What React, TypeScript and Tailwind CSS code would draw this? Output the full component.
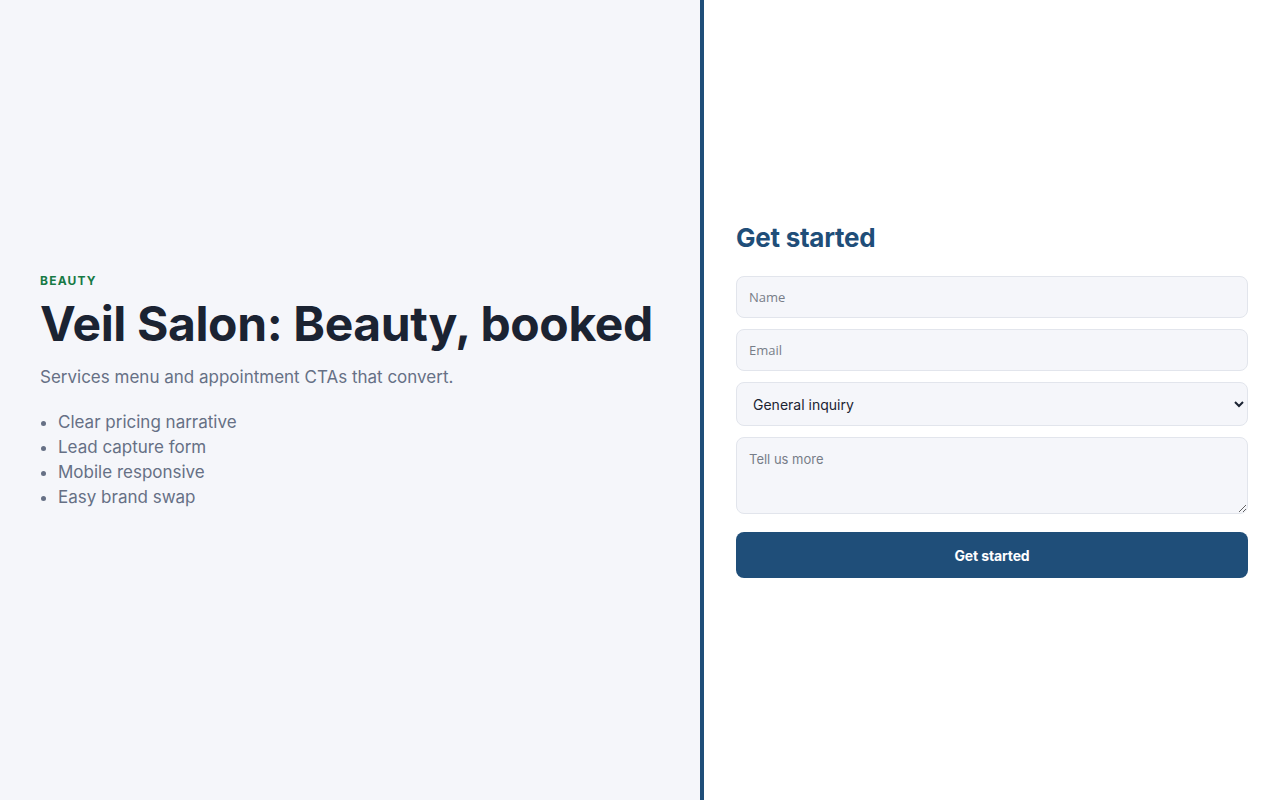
import { useState } from "react"

const features = ["Clear pricing narrative", "Lead capture form", "Mobile responsive", "Easy brand swap"]

function App() {
  const [name, setName] = useState("")
  const [email, setEmail] = useState("")
  const [topic, setTopic] = useState("general")
  const [message, setMessage] = useState("")

  const handleSubmit = (e: React.FormEvent) => {
    e.preventDefault()
  }

  return (
    <div className="min-h-screen flex font-['Inter',sans-serif]">
      <section className="w-[700px] shrink-0 bg-[#f5f6fa] flex items-center px-10 pb-[19px]">
        <div>
          <p className="text-[12px] font-bold tracking-[0.1em] text-[#177a45] mb-[6px]">BEAUTY</p>
          <h1 className="text-[48px] leading-[1.15] font-bold tracking-[-0.008em] text-[#1b2332]">
            Veil Salon: Beauty, booked
          </h1>
          <p className="mt-[14px] text-[17px] text-[#667085]">Services menu and appointment CTAs that convert.</p>
          <ul className="mt-[20px] list-disc pl-[18px] text-[17px] leading-[24.7px] text-[#667085] marker:text-[#667085]">
            {features.map((f) => (
              <li key={f}>{f}</li>
            ))}
          </ul>
        </div>
      </section>

      <section className="flex-1 bg-white border-l-4 border-[#1f4e79] flex items-center px-8 pb-[4px]">
        <form onSubmit={handleSubmit} className="w-full">
          <h2 className="text-[26px] font-bold tracking-[-0.01em] text-[#1f4e79] mb-[19px]">Get started</h2>
          <div className="flex flex-col gap-[11px]">
            <input
              type="text"
              placeholder="Name"
              value={name}
              onChange={(e) => setName(e.target.value)}
              className="w-full h-[42px] px-3 rounded-lg border border-[#e2e5ec] bg-[#f5f6fa] text-[13px] font-['Open_Sans',sans-serif] placeholder:text-[#777d88] focus:outline-none"
            />
            <input
              type="email"
              placeholder="Email"
              value={email}
              onChange={(e) => setEmail(e.target.value)}
              className="w-full h-[42px] px-3 rounded-lg border border-[#e2e5ec] bg-[#f5f6fa] text-[13px] font-['Open_Sans',sans-serif] placeholder:text-[#777d88] focus:outline-none"
            />
            <select
              value={topic}
              onChange={(e) => setTopic(e.target.value)}
              className="w-full h-[44px] px-3 rounded-lg border border-[#e2e5ec] bg-[#f5f6fa] text-[14px] text-[#1b2332] focus:outline-none"
            >
              <option value="general">General inquiry</option>
              <option value="booking">Booking</option>
              <option value="pricing">Pricing</option>
            </select>
            <textarea
              placeholder="Tell us more"
              value={message}
              onChange={(e) => setMessage(e.target.value)}
              className="w-full h-[77px] px-3 py-[12px] rounded-lg border border-[#e2e5ec] bg-[#f5f6fa] text-[13px] placeholder:text-[#777d88] focus:outline-none"
            />
          </div>
          <button
            type="submit"
            className="mt-[18px] w-full h-[46px] rounded-lg bg-[#1f4e79] text-white text-[14px] font-bold tracking-[-0.01em]"
          >
            Get started
          </button>
        </form>
      </section>
    </div>
  )
}

export default App
